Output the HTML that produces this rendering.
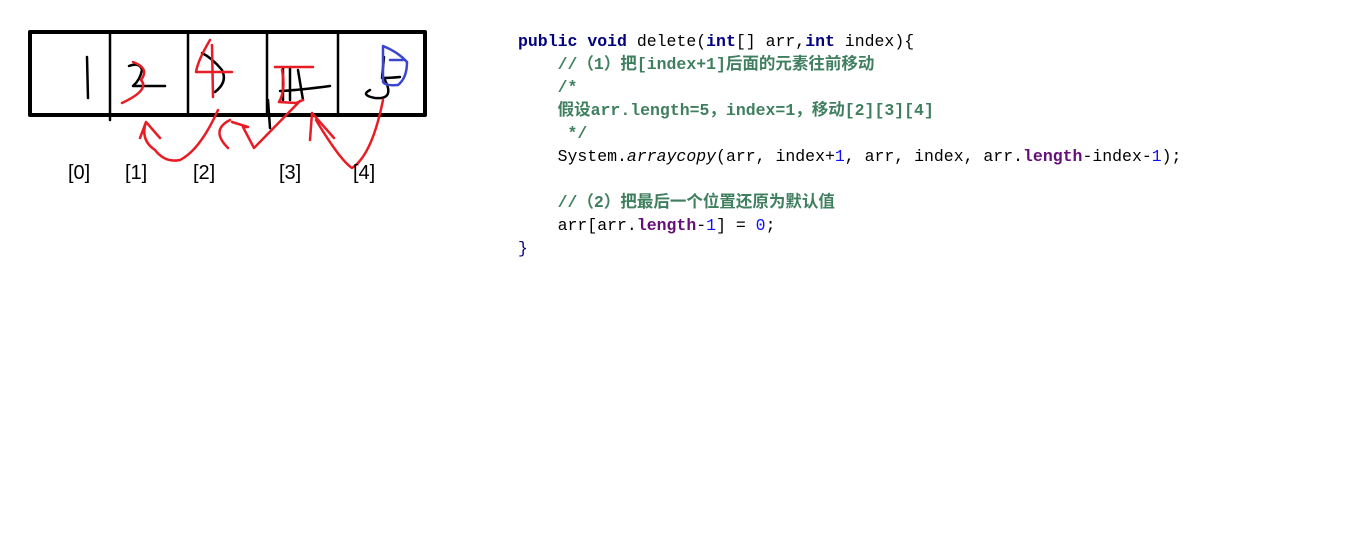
<!DOCTYPE html>
<html><head><meta charset="utf-8"><style>
body{margin:0;width:1352px;height:544px;background:#fff;position:relative;overflow:hidden}
.lbl{position:absolute;font:20px "Liberation Sans",sans-serif;color:#000;top:162px}
pre{position:absolute;left:518px;top:30px;margin:0;font:16.5px/23px "Liberation Mono","Noto Sans CJK SC",monospace;color:#000}
.k{color:#000080;font-weight:bold}
.c{color:#3f7f5f;font-weight:bold}
.f{color:#660e7a;font-weight:bold}
.n{color:#1010ff}
</style></head><body>
<svg width="440" height="200" style="position:absolute;left:0;top:0" fill="none" stroke-linecap="round" stroke-linejoin="round">
<rect x="30" y="32" width="395" height="83" stroke="#000" stroke-width="4"/>
<g stroke="#000" stroke-width="2.5">
<line x1="110" y1="32" x2="110" y2="120"/><line x1="188" y1="32" x2="188" y2="115"/><line x1="267" y1="32" x2="267" y2="115"/><line x1="338" y1="32" x2="338" y2="115"/>
<path d="M87 57 L88 98"/>
<path d="M129 66 Q140 62 142 70 Q140 80 133 86 L165 86"/>
<path d="M202 53 Q212 58 222 70 Q228 82 215 92"/>
<path d="M283 68 L283 100 M290 68 L290 100 M280 91 Q300 90 330 86 M298 70 L303 100 M268 100 L270 128"/>
<path d="M384 57 L382 78 Q390 78 400 77 M370 90 Q360 95 375 98 Q395 100 385 80"/>
</g>
<g stroke="#e81c24" stroke-width="2.5">
<path d="M133 62 Q150 68 141 80 Q150 90 122 103"/>
<path d="M210 40 Q198 60 196 72 L232 72 M212 45 L213 97"/>
<path d="M275 67 L313 67 M282 70 Q286 90 279 102 L296 103 L303 100"/>
<path d="M230 120 Q210 130 228 148"/>
<path d="M218 110 Q200 150 180 160 Q165 163 155 150 Q140 140 146 122 M146 122 L140 138 M146 122 L160 138"/>
<path d="M232 122 L248 127 L243 127 L254 148 L300 101"/>
<path d="M312 113 L310 140 M312 113 L334 138 M316 120 Q340 160 352 168 Q372 155 383 100"/>
</g>
<path d="M383 46 Q398 52 407 62 Q407 78 398 85 Q385 86 383 82 L383 46 M390 60 L403 60" stroke="#3a46d0" stroke-width="2.5"/>
</svg>
<div class="lbl" style="left:68px">[0]</div>
<div class="lbl" style="left:125px">[1]</div>
<div class="lbl" style="left:193px">[2]</div>
<div class="lbl" style="left:279px">[3]</div>
<div class="lbl" style="left:353px">[4]</div>
<pre><span class="k">public</span> <span class="k">void</span> delete(<span class="k">int</span>[] arr,<span class="k">int</span> index){
    <span class="c">//（1）把[index+1]后面的元素往前移动</span>
    <span class="c">/*</span>
    <span class="c">假设arr.length=5，index=1，移动[2][3][4]</span>
    <span class="c"> */</span>
    System.<i>arraycopy</i>(arr, index+<span class="n">1</span>, arr, index, arr.<span class="f">length</span>-index-<span class="n">1</span>);

    <span class="c">//（2）把最后一个位置还原为默认值</span>
    arr[arr.<span class="f">length</span>-<span class="n">1</span>] = <span class="n">0</span>;
<span class="k" style="font-weight:normal">}</span></pre>
</body></html>
